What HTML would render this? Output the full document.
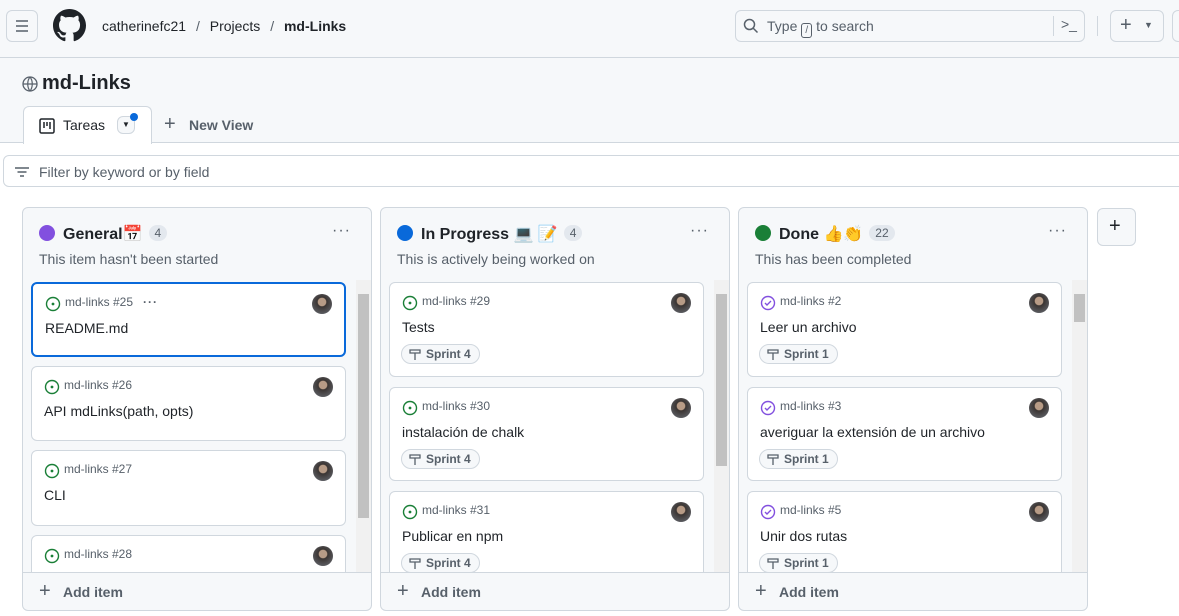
<!DOCTYPE html>
<html><head><meta charset="utf-8"><style>
*{box-sizing:border-box;margin:0;padding:0}
body{width:1179px;height:616px;overflow:hidden;background:#fff;font-family:"Liberation Sans","Noto Sans CJK JP",sans-serif;color:#1f2328;position:relative;font-size:14px}
.a{position:absolute}
.hdr{left:0;top:0;width:1179px;height:58px;background:#f6f8fa;border-bottom:1px solid #d0d7de}
.btn{border:1px solid #d0d7de;border-radius:6px;background:#f6f8fa}
.sub{left:0;top:58px;width:1179px;height:85px;background:#f6f8fa;border-bottom:1px solid #d0d7de}
.col{top:207px;width:350px;height:404px;background:#f6f8fa;border:1px solid #d0d7de;border-radius:6px;overflow:hidden}
.col .t{position:absolute;left:40px;top:16px;font-size:16px;font-weight:bold}
.col .dot{position:absolute;left:16px;top:17px;width:16px;height:16px;border-radius:50%}
.col .cnt{display:inline-block;background:#e3e8ee;border-radius:10px;font-size:12px;font-weight:normal;padding:1px 6px;margin-left:6px;color:#57606a;vertical-align:2px}
.col .d{position:absolute;left:16px;top:43px;font-size:14px;color:#57606a}
.col .m{position:absolute;right:20px;top:14px;font-size:16px;letter-spacing:1px;color:#57606a}
.list{position:absolute;left:0;top:72px;width:348px;height:292px;overflow:hidden}
.card{position:absolute;left:8px;width:315px;background:#fff;border:1px solid #d0d7de;border-radius:6px}
.card .mt{position:absolute;left:32px;top:11px;font-size:12px;color:#57606a}
.card .ic{position:absolute;left:12px;top:12px;width:16px;height:16px}
.card .av{position:absolute;right:12px;top:10px;width:20px;height:20px;border-radius:50%;background:radial-gradient(circle at 50% 40%,#b79b86 0 25%,#3a3432 30%,#6b7078 100%)}
.card .tt{position:absolute;left:12px;top:36px;font-size:14px}
.card .sp{position:absolute;left:11px;top:61px;height:20px;border:1px solid #d0d7de;background:#f6f8fa;border-radius:10px;font-size:12px;font-weight:bold;color:#57606a;padding:2px 8px 0 24px}
.card .sp svg{position:absolute;left:7px;top:3px}
.sb{position:absolute;left:333px;top:72px;width:15px;height:292px;background:#f1f1f1}
.sb .th{position:absolute;left:2px;width:11px;background:#c1c1c1}
.foot{position:absolute;left:0;top:364px;width:348px;height:40px;border-top:1px solid #d0d7de}
.foot span{position:absolute;left:40px;top:11px;font-size:14px;font-weight:bold;color:#57606a}
.foot b{position:absolute;left:16px;top:7px;font-size:20px;font-weight:normal;color:#57606a}
</style></head><body>
<div class="a hdr"></div>
<div class="a btn" style="left:6px;top:10px;width:32px;height:32px"><svg width="30" height="30" viewBox="0 0 30 30"><path d="M9 10h12M9 15h12M9 20h12" stroke="#57606a" stroke-width="1.6"/></svg></div>
<svg class="a" style="left:53px;top:9px" width="33" height="33" viewBox="0 0 16 16"><path fill="#1f2328" d="M8 0C3.58 0 0 3.58 0 8c0 3.54 2.29 6.530 5.47 7.59.4.07.55-.17.55-.38 0-.19-.01-.82-.01-1.49-2.01.37-2.53-.49-2.69-.94-.09-.23-.48-.94-.82-1.13-.28-.15-.68-.52-.01-.53.63-.01 1.08.58 1.23.82.72 1.21 1.87.87 2.33.66.07-.52.28-.87.51-1.07-1.78-.2-3.64-.89-3.64-3.95 0-.87.31-1.59.82-2.15-.08-.2-.36-1.02.08-2.12 0 0 .67-.21 2.2.82.64-.18 1.32-.27 2-.27.68 0 1.36.09 2 .27 1.53-1.04 2.2-.82 2.2-.82.44 1.1.16 1.92.08 2.12.51.56.82 1.27.82 2.15 0 3.07-1.87 3.75-3.65 3.95.29.25.54.73.54 1.48 0 1.070-.01 1.93-.01 2.2 0 .21.15.46.55.38A8.013 8.013 0 0016 8c0-4.42-3.58-8-8-8z"/></svg>
<div class="a" style="left:102px;top:18px;font-size:14px;color:#1f2328">catherinefc21 <span style="color:#57606a;margin:0 6px">/</span> Projects <span style="color:#57606a;margin:0 6px">/</span> <b>md-Links</b></div>
<div class="a btn" style="left:735px;top:10px;width:350px;height:32px;background:#f6f8fa"></div>
<svg class="a" style="left:743px;top:18px" width="16" height="16" viewBox="0 0 16 16"><circle cx="6.5" cy="6.5" r="5" fill="none" stroke="#57606a" stroke-width="1.5"/><path d="M10 10l4.5 4.5" stroke="#57606a" stroke-width="1.5"/></svg>
<div class="a" style="left:767px;top:18px;font-size:14px;color:#57606a">Type <span style="display:inline-block;border:1px solid #57606a;border-radius:3px;width:11px;height:15px;font-size:10px;text-align:center;line-height:13px;vertical-align:-2px">/</span> to search</div>
<div class="a" style="left:1053px;top:16px;width:1px;height:20px;background:#d0d7de"></div>
<div class="a" style="left:1061px;top:16px;font-size:14px;color:#57606a">&gt;_</div>
<div class="a" style="left:1097px;top:16px;width:1px;height:20px;background:#d0d7de"></div>
<div class="a btn" style="left:1110px;top:10px;width:54px;height:32px"><span style="position:absolute;left:9px;top:3px;font-size:20px;color:#57606a">+</span><span style="position:absolute;left:33px;top:9px;font-size:9px;color:#57606a">▼</span></div>
<div class="a btn" style="left:1172px;top:10px;width:30px;height:32px"></div>
<div class="a sub"></div>
<svg class="a" style="left:22px;top:76px" width="16" height="16" viewBox="0 0 16 16"><circle cx="8" cy="8" r="7" fill="none" stroke="#57606a" stroke-width="1.3"/><path d="M1 8h14M8 1c-3 3.5-3 10.5 0 14M8 1c3 3.5 3 10.5 0 14" fill="none" stroke="#57606a" stroke-width="1.2"/></svg>
<div class="a" style="left:42px;top:72px;font-size:20px;font-weight:bold">md-Links</div>
<div class="a" style="left:23px;top:106px;width:129px;height:38px;background:#fff;border:1px solid #d0d7de;border-bottom:none;border-radius:6px 6px 0 0"></div>
<svg class="a" style="left:39px;top:118px" width="16" height="16" viewBox="0 0 16 16"><rect x="1" y="1" width="14" height="14" rx="1.5" fill="none" stroke="#1f2328" stroke-width="1.5"/><path d="M5 4v6M8 4v4M11 4v7" stroke="#1f2328" stroke-width="1.5"/></svg>
<div class="a" style="left:63px;top:117px;font-size:14px">Tareas</div>
<div class="a btn" style="left:117px;top:116px;width:18px;height:18px;font-size:8px;text-align:center;line-height:16px;color:#1f2328">▼</div>
<div class="a" style="left:130px;top:113px;width:8px;height:8px;border-radius:50%;background:#0969da"></div>
<div class="a" style="left:164px;top:113px;font-size:20px;color:#57606a">+</div>
<div class="a" style="left:189px;top:117px;font-size:14px;font-weight:bold;color:#57606a">New View</div>
<div class="a" style="left:3px;top:155px;width:1190px;height:32px;border:1px solid #d0d7de;border-radius:6px;background:#fff"></div>
<svg class="a" style="left:14px;top:164px" width="16" height="16" viewBox="0 0 16 16"><path d="M1 4h14M3.5 8h9M6 12h4" stroke="#57606a" stroke-width="1.5"/></svg>
<div class="a" style="left:39px;top:164px;font-size:14px;color:#57606a">Filter by keyword or by field</div>

<div class="a col" style="left:22px">
 <div class="dot" style="background:#8250df"></div><div class="t">General📅<span class="cnt">4</span></div><div class="m">···</div>
 <div class="d">This item hasn't been started</div>
 <div class="list">
  <div class="card" style="top:2px;height:75px;border:2px solid #0969da"><svg class="ic" viewBox="0 0 16 16"><circle cx="8" cy="8" r="6.5" fill="none" stroke="#1a7f37" stroke-width="1.4"/><circle cx="8" cy="8" r="1.4" fill="#1a7f37"/></svg><div class="mt">md-links #25 &nbsp; <b style="letter-spacing:1px">···</b></div><div class="av"></div><div class="tt">README.md</div></div>
  <div class="card" style="top:86px;height:75px"><svg class="ic" viewBox="0 0 16 16"><circle cx="8" cy="8" r="6.5" fill="none" stroke="#1a7f37" stroke-width="1.4"/><circle cx="8" cy="8" r="1.4" fill="#1a7f37"/></svg><div class="mt">md-links #26</div><div class="av"></div><div class="tt">API mdLinks(path, opts)</div></div>
  <div class="card" style="top:170px;height:76px"><svg class="ic" viewBox="0 0 16 16"><circle cx="8" cy="8" r="6.5" fill="none" stroke="#1a7f37" stroke-width="1.4"/><circle cx="8" cy="8" r="1.4" fill="#1a7f37"/></svg><div class="mt">md-links #27</div><div class="av"></div><div class="tt">CLI</div></div>
  <div class="card" style="top:255px;height:75px"><svg class="ic" viewBox="0 0 16 16"><circle cx="8" cy="8" r="6.5" fill="none" stroke="#1a7f37" stroke-width="1.4"/><circle cx="8" cy="8" r="1.4" fill="#1a7f37"/></svg><div class="mt">md-links #28</div><div class="av"></div></div>
 </div>
 <div class="sb"><div class="th" style="top:14px;height:224px"></div></div>
 <div class="foot"><b>+</b><span>Add item</span></div>
</div>

<div class="a col" style="left:380px">
 <div class="dot" style="background:#0969da"></div><div class="t">In Progress 💻 📝<span class="cnt">4</span></div><div class="m">···</div>
 <div class="d">This is actively being worked on</div>
 <div class="list">
  <div class="card" style="top:2px;height:95px"><svg class="ic" viewBox="0 0 16 16"><circle cx="8" cy="8" r="6.5" fill="none" stroke="#1a7f37" stroke-width="1.4"/><circle cx="8" cy="8" r="1.4" fill="#1a7f37"/></svg><div class="mt">md-links #29</div><div class="av"></div><div class="tt">Tests</div><div class="sp"><svg width="12" height="12" viewBox="0 0 12 12"><path d="M1 2h10v3H1zM6 5v7" fill="none" stroke="#57606a" stroke-width="1.3"/></svg>Sprint 4</div></div>
  <div class="card" style="top:107px;height:94px"><svg class="ic" viewBox="0 0 16 16"><circle cx="8" cy="8" r="6.5" fill="none" stroke="#1a7f37" stroke-width="1.4"/><circle cx="8" cy="8" r="1.4" fill="#1a7f37"/></svg><div class="mt">md-links #30</div><div class="av"></div><div class="tt">instalación de chalk</div><div class="sp"><svg width="12" height="12" viewBox="0 0 12 12"><path d="M1 2h10v3H1zM6 5v7" fill="none" stroke="#57606a" stroke-width="1.3"/></svg>Sprint 4</div></div>
  <div class="card" style="top:211px;height:95px"><svg class="ic" viewBox="0 0 16 16"><circle cx="8" cy="8" r="6.5" fill="none" stroke="#1a7f37" stroke-width="1.4"/><circle cx="8" cy="8" r="1.4" fill="#1a7f37"/></svg><div class="mt">md-links #31</div><div class="av"></div><div class="tt">Publicar en npm</div><div class="sp"><svg width="12" height="12" viewBox="0 0 12 12"><path d="M1 2h10v3H1zM6 5v7" fill="none" stroke="#57606a" stroke-width="1.3"/></svg>Sprint 4</div></div>
 </div>
 <div class="sb"><div class="th" style="top:14px;height:172px"></div></div>
 <div class="foot"><b>+</b><span>Add item</span></div>
</div>

<div class="a col" style="left:738px">
 <div class="dot" style="background:#1a7f37"></div><div class="t">Done 👍👏<span class="cnt">22</span></div><div class="m">···</div>
 <div class="d">This has been completed</div>
 <div class="list">
  <div class="card" style="top:2px;height:95px"><svg class="ic" viewBox="0 0 16 16"><circle cx="8" cy="8" r="6.5" fill="none" stroke="#8250df" stroke-width="1.4"/><path d="M5 8l2 2 4-4" fill="none" stroke="#8250df" stroke-width="1.4"/></svg><div class="mt">md-links #2</div><div class="av"></div><div class="tt">Leer un archivo</div><div class="sp"><svg width="12" height="12" viewBox="0 0 12 12"><path d="M1 2h10v3H1zM6 5v7" fill="none" stroke="#57606a" stroke-width="1.3"/></svg>Sprint 1</div></div>
  <div class="card" style="top:107px;height:94px"><svg class="ic" viewBox="0 0 16 16"><circle cx="8" cy="8" r="6.5" fill="none" stroke="#8250df" stroke-width="1.4"/><path d="M5 8l2 2 4-4" fill="none" stroke="#8250df" stroke-width="1.4"/></svg><div class="mt">md-links #3</div><div class="av"></div><div class="tt">averiguar la extensión de un archivo</div><div class="sp"><svg width="12" height="12" viewBox="0 0 12 12"><path d="M1 2h10v3H1zM6 5v7" fill="none" stroke="#57606a" stroke-width="1.3"/></svg>Sprint 1</div></div>
  <div class="card" style="top:211px;height:95px"><svg class="ic" viewBox="0 0 16 16"><circle cx="8" cy="8" r="6.5" fill="none" stroke="#8250df" stroke-width="1.4"/><path d="M5 8l2 2 4-4" fill="none" stroke="#8250df" stroke-width="1.4"/></svg><div class="mt">md-links #5</div><div class="av"></div><div class="tt">Unir dos rutas</div><div class="sp"><svg width="12" height="12" viewBox="0 0 12 12"><path d="M1 2h10v3H1zM6 5v7" fill="none" stroke="#57606a" stroke-width="1.3"/></svg>Sprint 1</div></div>
 </div>
 <div class="sb"><div class="th" style="top:14px;height:28px"></div></div>
 <div class="foot"><b>+</b><span>Add item</span></div>
</div>

<div class="a btn" style="left:1097px;top:208px;width:39px;height:38px"><span style="position:absolute;left:11px;top:6px;font-size:20px;color:#1f2328">+</span></div>
</body></html>
